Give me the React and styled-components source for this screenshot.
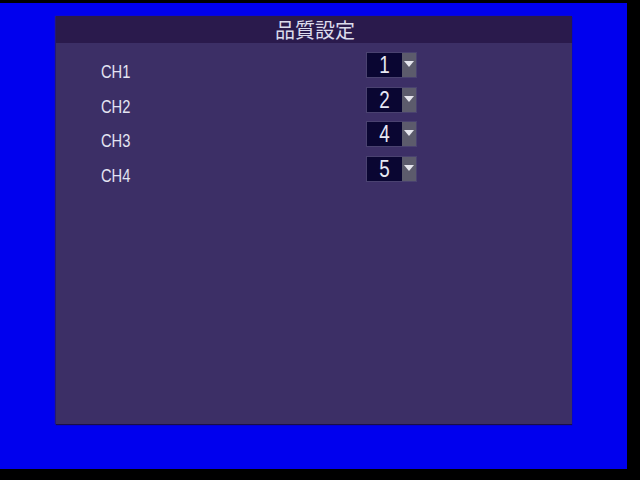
import React from "react";
import styled, { createGlobalStyle } from "styled-components";

const Global = createGlobalStyle`
  html, body { margin: 0; padding: 0; background: #000; }
  body { width: 640px; height: 480px; overflow: hidden; font-family: "Liberation Sans", Arial, sans-serif; }
`;

const Screen = styled.div`
  margin-top: 3px;
  width: 627px;
  height: 466px;
  background: #0000ee;
  padding: 13px 0 0 56px;
  box-sizing: border-box;
`;

const Panel = styled.div`
  width: 516px;
  height: 408px;
  background: #3c2f66;
  box-shadow: 0 1px 1px #1a0f4a, -1px 0 1px #2a1f7a;
  display: flex;
  flex-direction: column;
`;

const TitleBar = styled.div`
  height: 27px;
  background: #2a1a4c;
  color: #dcdcec;
  font-family: "Noto Sans CJK JP", "Noto Sans CJK SC", sans-serif;
  font-size: 20px;
  line-height: 27px;
  text-align: center;
  padding-left: 2px;
`;

const Body = styled.div`
  padding: 10px 0 0 45px;
  display: flex;
  flex-direction: column;
`;

const Row = styled.div`
  height: 34.6px;
  display: flex;
  align-items: flex-start;
`;

const Label = styled.div`
  width: 266px;
  margin-top: 9px;
  color: #e4e4f2;
  font-size: 17.5px;
  line-height: 20px;
  transform: scaleX(0.84);
  transform-origin: left center;
`;

const Select = styled.div`
  display: flex;
  height: 24px;
  box-shadow: 0 0 0 1px #4a4270;
`;

const ValueBox = styled.div`
  width: 35px;
  background: #0a0632;
  display: flex;
  justify-content: center;
`;

const Value = styled.span`
  color: #e8e8f4;
  font-size: 23px;
  line-height: 25px;
  transform: scaleX(0.82);
`;

const Arrow = styled.div`
  width: 14px;
  background: #5c5b6c;
  display: flex;
  align-items: center;
  justify-content: center;
  &::after {
    content: "";
    width: 0;
    height: 0;
    border-left: 5px solid transparent;
    border-right: 5px solid transparent;
    border-top: 6px solid #e6e6ee;
    margin-top: -2px;
  }
`;

const rows = [
  { ch: "CH1", v: 1 },
  { ch: "CH2", v: 2 },
  { ch: "CH3", v: 4 },
  { ch: "CH4", v: 5 },
];

export default function App() {
  return (
    <>
      <Global />
      <Screen>
        <Panel>
          <TitleBar>品質設定</TitleBar>
          <Body>
            {rows.map((r) => (
              <Row key={r.ch}>
                <Label>{r.ch}</Label>
                <Select>
                  <ValueBox>
                    <Value>{r.v}</Value>
                  </ValueBox>
                  <Arrow />
                </Select>
              </Row>
            ))}
          </Body>
        </Panel>
      </Screen>
    </>
  );
}
